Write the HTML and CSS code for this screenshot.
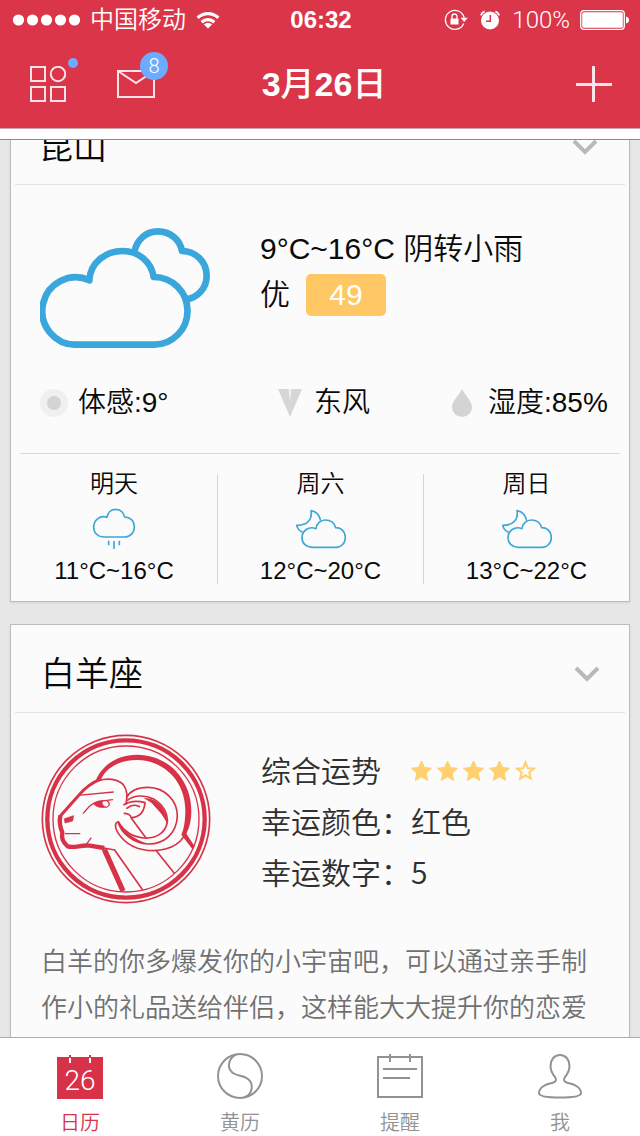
FILE: index.html
```html
<!DOCTYPE html>
<html lang="zh-CN">
<head>
<meta charset="utf-8">
<meta name="viewport" content="width=device-width, initial-scale=1">
<title>3月26日</title>
<link rel="stylesheet" href="styles.css">
</head>
<body>
<header class="header">
  <div class="status">
    <div class="status-left">
      <svg width="67" height="12" viewBox="0 0 67 12" fill="#fff" aria-hidden="true"><circle cx="5.5" cy="6" r="5.6"/><circle cx="19.5" cy="6" r="5.6"/><circle cx="33.5" cy="6" r="5.6"/><circle cx="47.5" cy="6" r="5.6"/><circle cx="61.5" cy="6" r="5.6"/></svg>
      <span>中国移动</span>
      <svg width="24" height="18" viewBox="0 0 26 20" fill="none" stroke="#fff" stroke-width="3.600" aria-hidden="true"><path d="M1.500 7.500a16.400 16.400 0 0 1 23 0"/><path d="M6 12.500a10 10 0 0 1 14 0"/><path d="M13 19.500l-4.500-4.500a6.300 6.300 0 0 1 9 0z" fill="#fff" stroke="none"/></svg>
    </div>
    <time class="clock">06:32</time>
    <div class="status-right">
      <svg width="24" height="22" viewBox="0 0 24 22" aria-hidden="true"><path d="M19.700 14.500A9.500 9.500 0 1 1 20.200 9" fill="none" stroke="#fff" stroke-width="1.300"/><path d="M16.500 8.800h7.300L20.200 13z" fill="#fff"/><rect x="6.500" y="9.500" width="8" height="6" rx=".6" fill="#fff"/><path d="M8 10V7.500a2.500 2.500 0 0 1 5 0V10" fill="none" stroke="#fff" stroke-width="1.300"/></svg>
      <svg class="alarm" width="20" height="20" viewBox="0 0 20 20" aria-hidden="true"><circle cx="10" cy="10.500" r="9" fill="#fff"/><path d="M.8 5.300A7 7 0 0 1 4.600 1.400M15.400 1.400A7 7 0 0 1 19.200 5.300" fill="none" stroke="#fff" stroke-width="1.800"/><path d="M10.300 5v6.300H6" fill="none" stroke="#db3549" stroke-width="1.500"/></svg>
      <span class="thin">100%</span>
      <svg width="49" height="20" viewBox="0 0 49 20" aria-hidden="true"><rect x=".7" y=".7" width="43.600" height="18.600" rx="3" fill="none" stroke="#fff" stroke-width="1.300"/><rect x="2.200" y="2.200" width="40.600" height="15.600" rx="1.500" fill="#fff"/><path d="M46 6.500c4 .5 4 6.500 0 7z" fill="#fff"/></svg>
    </div>
  </div>
  <nav class="nav">
    <div class="nav-left">
      <button class="icon-button" aria-label="应用">
        <svg width="36" height="36" viewBox="0 0 36 36" fill="none" stroke="#ffe3ea" stroke-width="2" aria-hidden="true"><path d="M1 1h14v14H1zM1 21h14v14H1zM21 21h14v14H21z"/><circle cx="28" cy="8" r="7.200"/></svg>
        <span class="dot"></span>
      </button>
      <button class="icon-button" aria-label="邮件">
        <svg width="38" height="28" viewBox="0 0 38 28" fill="none" stroke="#ffe3ea" stroke-width="2" aria-hidden="true"><path d="M1 1h36v26H1zM1 1l18 12L37 1"/></svg>
        <span class="count thin">8</span>
      </button>
    </div>
    <h1 class="title"><b>3</b>月<b>26</b>日</h1>
    <button class="icon-button add" aria-label="添加">
      <svg width="36" height="36" viewBox="0 0 36 36" stroke="#ffe3ea" stroke-width="3" aria-hidden="true"><path d="M17.500 0v36M0 18.500h36"/></svg>
    </button>
  </nav>
  <div class="strip"></div>
</header>

<main class="feed">
  <div class="cards">
    <section class="card">
      <div class="card-head city">
        <h2 class="card-title">昆山</h2>
        <button class="icon-button" aria-label="更换城市"><svg width="26" height="18" viewBox="0 0 26 18" fill="none" stroke="#b9b9b9" stroke-width="4" aria-hidden="true"><path d="M2 3l11 11L24 3"/></svg></button>
      </div>
      <div class="summary weather">
        <svg class="cloud" viewBox="120 84 510 360" fill="none" stroke="#39a7db" stroke-width="20" stroke-linejoin="round" aria-hidden="true"><path d="M268 241A100 101 0 1 0 229 434H463A100 101 0 0 0 461 231C454 185 415 153 368 153C315 153 270 190 268 241Z"/><path d="M403 156C410 118 439 94 474 94C510 94 540 119 546 153C587 153 620 186 620 227C620 265 592 294 558 298"/></svg>
        <div class="conditions">
          <p>9°C~16°C 阴转小雨</p>
          <p class="air">优 <span class="aqi">49</span></p>
        </div>
      </div>
      <div class="stats">
        <div class="stat"><svg width="28" height="28" viewBox="0 0 28 28" aria-hidden="true"><circle cx="14" cy="14" r="14" fill="#f0f0f0"/><circle cx="14" cy="14" r="7" fill="#d4d4d4"/></svg><span>体感:9°</span></div>
        <div class="stat wind"><svg width="24" height="28" viewBox="0 0 24 28" aria-hidden="true"><path d="M0 0h10.500L12 12 13.500 0H24L12 28z" fill="#d6d6d6"/><path d="M11.300 0h1.400L12 10z" fill="#e4e4e4"/></svg><span>东风</span></div>
        <div class="stat humidity"><svg width="22" height="28" viewBox="0 0 22 28" aria-hidden="true"><path d="M11 0C13 5 21 12 21 18.500A10 9.500 0 0 1 1 18.500C1 12 9 5 11 0z" fill="#d4d4d4"/></svg><span>湿度:85%</span></div>
      </div>
      <ul class="forecast">
        <li class="day">
          <span class="day-name">明天</span>
          <svg width="50" height="42" viewBox="264 231 150 126" fill="none" stroke="#3da7d8" stroke-width="5" stroke-linejoin="round" aria-hidden="true"><path d="M318 262C296 254 278 272 278 291C278 309 291 321 309 321H370C388 321 400 308 400 291C400 273 388 261 371 261C368 247 357 238 344 238C330 238 320 248 318 262Z"/><path d="M323 332v14M355 332v14M339 333v24"/></svg>
          <span class="temps">11°C~16°C</span>
        </li>
        <li class="day">
          <span class="day-name">周六</span>
          <svg width="50" height="42" viewBox="546 231 150 126" fill="none" stroke="#3da7d8" stroke-width="5" stroke-linejoin="round" aria-hidden="true"><path d="M606 296C584 287 564 303 564 323C564 340 577 352 594 352H666C682 352 694 339 694 323C694 305 682 293 665 293C661 279 649 270 634 270C619 270 608 281 606 296Z"/><path d="M566 307C556 303 550 295 548 286C580 287 596 267 591 242C607 245 617 256 620 272"/></svg>
          <span class="temps">12°C~20°C</span>
        </li>
        <li class="day">
          <span class="day-name">周日</span>
          <svg width="50" height="42" viewBox="546 231 150 126" fill="none" stroke="#3da7d8" stroke-width="5" stroke-linejoin="round" aria-hidden="true"><path d="M606 296C584 287 564 303 564 323C564 340 577 352 594 352H666C682 352 694 339 694 323C694 305 682 293 665 293C661 279 649 270 634 270C619 270 608 281 606 296Z"/><path d="M566 307C556 303 550 295 548 286C580 287 596 267 591 242C607 245 617 256 620 272"/></svg>
          <span class="temps">13°C~22°C</span>
        </li>
      </ul>
    </section>

    <section class="card">
      <div class="card-head">
        <h2 class="card-title">白羊座</h2>
        <button class="icon-button" aria-label="更换星座"><svg width="26" height="18" viewBox="0 0 26 18" fill="none" stroke="#b9b9b9" stroke-width="4" aria-hidden="true"><path d="M2 3l11 11L24 3"/></svg></button>
      </div>
      <div class="summary horoscope">
        <svg class="emblem" viewBox="32 26 510 510" fill="none" stroke="#d83248" stroke-width="5" stroke-linejoin="round" aria-hidden="true">
          <circle cx="287" cy="281" r="251"/><circle cx="287" cy="281" r="236" stroke-width="13"/><circle cx="287" cy="281" r="219" stroke-width="4"/>
          <path d="M196 166C215 120 260 88 320 88C415 88 483 165 483 255C483 285 478 307 468 325L492 361L488 374L453 328C461 310 465 285 465 255C465 170 403 105 320 104C265 104 225 130 212 163Z" fill="#d83248" stroke="none"/>
          <path d="M205 166C230 158 262 160 279 178C292 194 291 212 287 237"/>
          <path d="M210 162C178 174 162 190 146 209L90 272" stroke-width="9"/>
          <path d="M90 270C86 290 89 305 96 321C93 340 97 350 112 363C132 369 152 358 178 361L222 368" stroke-width="13"/>
          <path d="M222 372L278 497" stroke-width="16"/>
          <path d="M220 368L253 374L337 494"/>
          <path d="M143 210L250 200M158 265C173 247 185 232 205 228L248 223M230 245C240 240 238 231 230 226M104 325H150M183 337L168 357" stroke-width="4"/>
          <path d="M190 236C198 228 207 226 219 226C212 233 216 241 230 246C207 249 196 243 190 236ZM102 280L130 271L127 287L104 293Z" fill="#d83248" stroke-width="2"/>
          <path d="M279 239C296 229 322 226 344 232C342 255 331 276 302 277C302 269 292 264 280 264M288 250C303 238 319 237 329 245M302 277L347 338"/>
          <path d="M288 217C300 195 325 186 353 186C405 187 441 226 441 272C439 324 402 357 353 356C308 354 274 323 264 290C252 291 254 309 262 321C284 356 323 376 371 376C425 374 461 350 470 310"/>
          <path d="M290 226C312 207 346 209 372 222C400 240 412 264 411 290C405 325 375 340 341 338C305 335 279 315 264 290"/>
          <path d="M340 218C385 217 413 257 411 298C400 268 377 249 364 233Z" fill="#d83248" stroke="none"/>
          <path d="M260 288C271 329 308 353 353 356C310 341 279 320 266 288Z" fill="#d83248" stroke="none"/>
          <path d="M378 376L433 445"/>
        </svg>
        <dl class="fortune">
          <dt>综合运势</dt>
          <dd><svg class="stars" width="126" height="22" viewBox="0 0 126 22" role="img" aria-label="四星" fill="#ffd06e" stroke="#ffd06e"><defs><path id="star" d="M10.500 1l3 6.500 7 .8-5.300 4.800 1.500 7.400-6.200-3.800-6.200 3.800 1.500-7.400L.5 8.300l7-.8z"/></defs><use href="#star"/><use href="#star" x="26"/><use href="#star" x="52"/><use href="#star" x="78"/><path d="M114.500 2.500l2.400 5.700 6.100.4-4.700 4 1.500 6-5.300-3.300-5.300 3.300 1.500-6-4.700-4 6.100-.4z" fill="none" stroke-width="2"/></svg></dd>
          <dt>幸运颜色：</dt>
          <dd>红色</dd>
          <dt>幸运数字：</dt>
          <dd>5</dd>
        </dl>
      </div>
      <p class="advice">白羊的你多爆发你的小宇宙吧，可以通过亲手制作小的礼品送给伴侣，这样能大大提升你的恋爱</p>
    </section>
  </div>
</main>

<nav class="tabs">
  <a class="tab active" href="#calendar">
    <span class="tab-icon date-icon"><svg width="46" height="46" viewBox="0 0 46 46" aria-hidden="true"><path d="M0 4h46v42H0z" fill="#d83248"/><path d="M13 2v2M33 2v2" stroke="#d83248" stroke-width="2"/><path d="M13 5v5M33 5v5" stroke="#fff" stroke-width="2"/></svg><span class="date-number thin">26</span></span>
    <span>日历</span>
  </a>
  <a class="tab" href="#almanac">
    <svg class="tab-icon" width="46" height="46" viewBox="0 0 46 46" fill="none" stroke="#929292" stroke-width="2" aria-hidden="true"><circle cx="23" cy="23" r="22"/><path d="M19 1.500C12 5 10 13 14 18C18 24 25 21 31 26C37 31 36 41 27 44.500"/></svg>
    <span>黄历</span>
  </a>
  <a class="tab" href="#reminders">
    <svg class="tab-icon" width="46" height="46" viewBox="0 0 46 46" fill="none" stroke="#929292" stroke-width="2" aria-hidden="true"><path d="M1 4h44v40H1zM13 1v8M33 1v8M6 16h34M6 25h27"/></svg>
    <span>提醒</span>
  </a>
  <a class="tab" href="#me">
    <svg class="tab-icon" width="46" height="46" viewBox="0 0 46 46" fill="none" stroke="#929292" stroke-width="2" aria-hidden="true"><path d="M23 2C17 2 13.500 7 13.500 13C13.500 18 15.500 21 18 24C20 27 19 29 15 30C8 31 2 35 2 40C2 43.500 12 44.500 23 44.500C34 44.500 44 43.500 44 40C44 35 38 31 31 30C27 29 26 27 28 24C30.500 21 32.500 18 32.500 13C32.500 7 29 2 23 2Z"/></svg>
    <span>我</span>
  </a>
</nav>
</body>
</html>
```
FILE: styles.css
```css
* {
  box-sizing: border-box;
  margin: 0;
  padding: 0;
}

body {
  display: flex;
  flex-direction: column;
  height: 100vh;
  background: #e7e7e7;
  color: #0a0a0a;
  font-family: "Liberation Sans", "Noto Sans CJK SC", sans-serif;
  font-weight: 350;
}

svg {
  display: block;
  flex: none;
}

ul {
  list-style: none;
}

.icon-button {
  position: relative;
  border: 0;
  background: none;
  color: inherit;
  font: inherit;
}

.thin {
  font-family: Roboto, sans-serif;
  font-weight: 300;
}

.header {
  flex: none;
  background: #db3549;
  color: #fff;
}

.status {
  display: grid;
  grid-template-columns: 1fr auto 1fr;
  align-items: center;
  height: 40px;
  padding: 0 11px 0 13px;
  font-size: 24px;
  line-height: 40px;
}

.status-left,
.status-right {
  display: flex;
  align-items: center;
  gap: 10px;
}

.status-right {
  justify-content: flex-end;
}

.alarm {
  margin: 0 2px;
}

.clock {
  font-weight: 700;
}

.nav {
  display: grid;
  grid-template-columns: 1fr auto 1fr;
  align-items: center;
  height: 88px;
  padding: 0 22px 0 30px;
}

.nav-left {
  display: flex;
  align-items: center;
  gap: 51px;
}

.title {
  font-size: 34px;
  font-weight: 500;
  line-height: 44px;
}

.add {
  justify-self: end;
  padding: 6px;
}

.dot {
  position: absolute;
  top: -8px;
  right: -12px;
  width: 10px;
  height: 10px;
  border-radius: 50%;
  background: #6cabff;
}

.count {
  position: absolute;
  top: -18px;
  right: -13px;
  width: 28px;
  height: 28px;
  border-radius: 50%;
  background: #6cabff;
  font-size: 20px;
  line-height: 28px;
  text-align: center;
}

.strip {
  height: 12px;
  border-top: 1px solid #c9a5aa;
  border-bottom: 1px solid #8c8c8c;
  background: #fff;
}

.feed {
  flex: 1;
  min-height: 0;
  overflow: hidden;
}

/* Feed scrolled partway through the first card's heading */
.cards {
  display: flex;
  flex-direction: column;
  gap: 22px;
  margin-top: -44px;
  padding: 0 10px;
}

.card {
  border: 1px solid #bdbdbd;
  background: #fbfbfb;
  box-shadow: 0 1px 2px #d4d4d4;
}

.card-head {
  display: flex;
  align-items: center;
  justify-content: space-between;
  height: 88px;
  margin: 0 4px;
  padding: 10px 25px 0 26px;
  border-bottom: 1px solid #e2e2e2;
}

.city {
  padding: 12px 27px 0 24px;
}

.card-title {
  font-size: 34px;
  font-weight: 350;
  line-height: 48px;
}

.summary {
  display: grid;
  grid-template-columns: 170px 1fr;
  column-gap: 50px;
}

.weather {
  padding: 43px 29px 0;
  font-size: 30px;
  line-height: 42px;
}

.cloud {
  width: 170px;
  height: 120px;
}

.air {
  display: flex;
  align-items: center;
  gap: 16px;
  padding-top: 4px;
}

.aqi {
  width: 80px;
  border-radius: 5px;
  background: #ffc864;
  color: #fff;
  text-align: center;
}

.stats {
  display: grid;
  grid-template-columns: 238fr 173fr 160fr;
  margin: 0 9px;
  padding: 35px 9px 30px 20px;
  border-bottom: 1px solid #d9d9d9;
  font-size: 28px;
  line-height: 40px;
  white-space: nowrap;
}

.stat {
  display: flex;
  align-items: center;
  gap: 10px;
}

.wind {
  gap: 12px;
}

.humidity {
  gap: 15px;
}

.forecast {
  display: grid;
  grid-template-columns: repeat(3, 1fr);
  padding: 20px 0 17px;
  font-size: 24px;
}

.day {
  display: flex;
  flex-direction: column;
  align-items: center;
}

.day + .day {
  border-left: 1px solid #d4d4d4;
}

.day-name {
  margin-bottom: 13px;
  line-height: 20px;
}

.temps {
  margin-top: 9px;
  line-height: 26px;
}

.horoscope {
  padding: 21px 30px 0;
}

.emblem {
  width: 170px;
  height: 170px;
}

.fortune {
  display: grid;
  grid-template-columns: 150px 1fr;
  align-content: start;
  padding-top: 10px;
  color: #303030;
  font-family: "Noto Sans CJK SC", sans-serif;
  font-size: 30px;
  line-height: 51px;
}

.stars {
  margin-top: 16px;
}

.advice {
  padding: 35px 30px 60px;
  color: #707070;
  font-size: 26px;
  line-height: 46px;
}

.tabs {
  display: grid;
  grid-template-columns: repeat(4, 1fr);
  flex: none;
  height: 99px;
  border-top: 1px solid #adadad;
  background: #fff;
}

.tab {
  display: flex;
  flex-direction: column;
  align-items: center;
  padding-top: 15px;
  color: #929292;
  font-size: 20px;
  line-height: 20px;
  text-decoration: none;
}

.tab-icon {
  margin-bottom: 14px;
}

.active {
  color: #d83248;
}

.date-icon {
  position: relative;
}

.date-number {
  position: absolute;
  inset: 14px 0 0;
  color: #fff;
  font-size: 28px;
  line-height: 28px;
  text-align: center;
}
```
